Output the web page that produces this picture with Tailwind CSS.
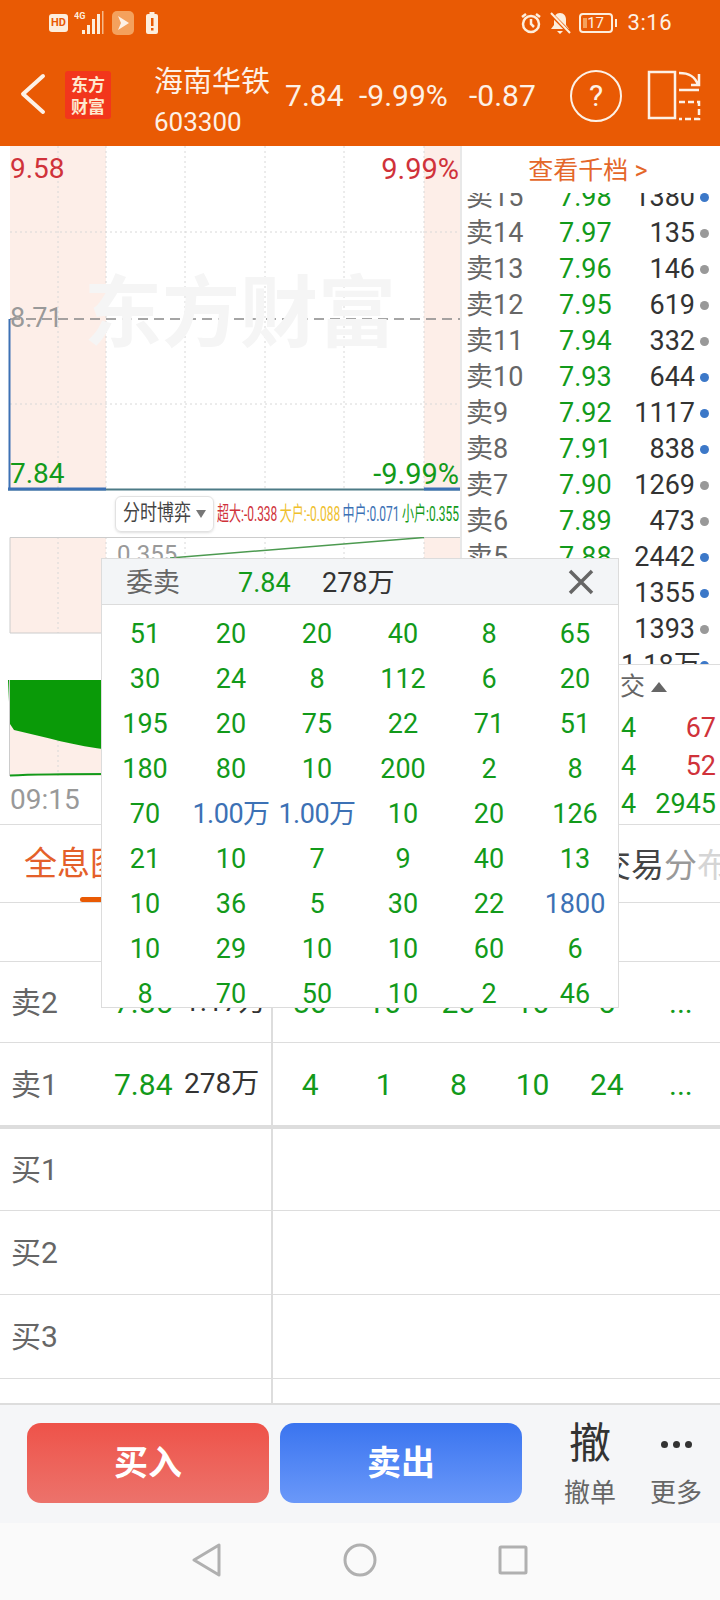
<!DOCTYPE html>
<html lang="zh">
<head>
<meta charset="utf-8">
<script src="https://cdn.jsdelivr.net/npm/@tailwindcss/browser@4"></script>
</head>
<body class="m-0 bg-white">
<div class="relative w-[720px] h-[1600px] overflow-hidden bg-white flex flex-col font-['Roboto','Noto_Sans_CJK_SC',sans-serif]">

  <!-- header -->
  <header class="h-[146px] shrink-0 bg-[#e95a04] text-[#fdf1e6] flex flex-col">
    <div class="h-[46px] flex items-center pl-[49px] pr-[48px] justify-between">
      <div class="flex items-center gap-[6px]">
        <span class="w-[19px] h-[18px] bg-[#fdeedd] rounded-[3px] text-[#e95a04] text-[11px] font-bold leading-[18px] text-center">HD</span>
        <svg width="32" height="28" viewBox="0 0 32 28"><text x="0" y="10" font-size="9" font-weight="700" fill="#fdeedd" font-family="Roboto">4G</text><g fill="#fdeedd"><rect x="8" y="21" width="3" height="4"/><rect x="13" y="16" width="3" height="9"/><rect x="18" y="10" width="3" height="15"/><rect x="23" y="5" width="3" height="20"/></g><rect x="28" y="2" width="1.500" height="23" fill="#f6b98a"/></svg>
        <svg width="22" height="24" viewBox="0 0 22 24"><rect width="22" height="24" rx="5" fill="#f4a15d"/><path d="M6 5l11 7-11 7 3-7z" fill="#fdf1e6"/></svg>
        <svg width="12" height="22" viewBox="0 0 12 22" class="ml-[6px]"><rect x="3.500" y="0" width="5" height="2" fill="#fdeedd"/><rect y="2" width="12" height="20" rx="2" fill="#fdeedd"/><rect x="5" y="6" width="2.500" height="8" fill="#e95a04"/><rect x="5" y="16" width="2.500" height="2.500" fill="#e95a04"/></svg>
      </div>
      <div class="flex items-center">
        <svg width="22" height="22" viewBox="0 0 22 22" fill="none" stroke="#fdeedd" stroke-width="2.500"><circle cx="11" cy="12" r="8"/><path d="M11 7v5l3 3M2 5l4-3M20 5l-4-3" /></svg>
        <svg width="22" height="24" viewBox="0 0 22 24" class="ml-[7px]"><path d="M11 2c4 0 6 3 6 7v5l3 4H2l3-4V9c0-4 2-7 6-7zM8 20h6l-3 3z" fill="#fdeedd"/><path d="M1 2l20 20" stroke="#e95a04" stroke-width="4"/><path d="M2 2l19 20" stroke="#fdeedd" stroke-width="2"/></svg>
        <div class="ml-[8px] relative w-[34px] h-[20px] border-2 border-[#fdeedd] rounded-[4px] text-[15px] leading-[17px] text-center">
          <span class="absolute left-[2px] top-[3px] w-[4px] h-[10px] bg-[#f5a25a]"></span>17
        </div>
        <span class="w-[2px] h-[8px] bg-[#fdeedd] ml-[2px]"></span>
        <span class="ml-[11px] text-[22px] leading-none tracking-[0.5px]">3:16</span>
      </div>
    </div>
    <div class="flex-1 flex items-center relative">
      <svg width="26" height="42" viewBox="0 0 26 42" class="ml-[20px] mb-[4px]" fill="none" stroke="#fdf1e6" stroke-width="4" stroke-linecap="round" stroke-linejoin="round"><path d="M23 3L3 21l20 18"/></svg>
      <div class="ml-[19px] mb-[2px] w-[46px] h-[48px] bg-[#f2361c] rounded-[3px] text-[#fde9cf] text-[17px] leading-[22px] font-bold text-center pt-[2px] font-['Noto_Sans_CJK_SC',sans-serif]">东方<br>财富</div>
      <div class="ml-[43px] pt-[9px] flex flex-col">
        <span class="text-[29px] leading-[42px]">海南华铁</span>
        <span class="text-[26px] leading-[38px]">603300</span>
      </div>
      <div class="ml-[15px] flex text-[30px] leading-none">
        <span class="w-[74px]">7.84</span><span class="w-[110px]">-9.99%</span><span>-0.87</span>
      </div>
      <div class="absolute left-[570px] top-[24px] w-[52px] h-[52px] border-2 border-[#fdf1e6] rounded-full text-[30px] leading-[48px] text-center">?</div>
      <svg width="56" height="52" viewBox="0 0 56 52" class="absolute left-[647px] top-[24px]" fill="none" stroke="#fdf1e6" stroke-width="2.500"><rect x="2" y="2" width="26" height="46"/><path d="M32 3c10 0 16 3 19 12M52 4v11h-8M32 20h20"/><path d="M32 32h20v17H32" stroke-dasharray="6 3"/></svg>
    </div>
  </header>

  <!-- quote area -->
  <div class="h-[679px] shrink-0 flex border-b border-[#dddddd]">
    <!-- left charts -->
    <div class="w-[460px] shrink-0 flex flex-col">
      <div class="relative h-[345px]">
        <svg width="460" height="345" viewBox="0 0 460 345" class="absolute inset-0">
          <rect x="10" width="96" height="343" fill="#fdeee8"/>
          <rect x="424" width="36" height="343" fill="#fdeee8"/>
          <g stroke="#d8d8d8" stroke-dasharray="2 3">
            <path d="M58 0v343M106 0v343M185 0v343M265 0v343M344 0v343M424 0v343M10 86h450M10 258h450"/>
          </g>
          <path d="M10 173h450" stroke="#888888" stroke-width="1.500" stroke-dasharray="10 6"/>
          <path d="M9.500 173V344" stroke="#3c71b5" stroke-width="2"/>
          <path d="M8 343.500h452" stroke="#4d7a86" stroke-width="2"/>
          <path d="M8 343h98M424 343h36" stroke="#3c71b5" stroke-width="3"/>
        </svg>
        <span class="absolute left-[84px] top-[122px] text-[#f5f5f5] text-[78px] leading-none font-bold whitespace-nowrap font-['Noto_Sans_CJK_SC',sans-serif]">东方财富</span>
        <span class="absolute left-[10px] top-[9px] text-[#d0323a] text-[28px] leading-none">9.58</span>
        <span class="absolute right-[1px] top-[9px] text-[#d0323a] text-[29px] leading-none">9.99%</span>
        <span class="absolute left-[10px] top-[159px] text-[#999999] text-[27px] leading-none">8.71</span>
        <span class="absolute left-[10px] top-[314px] text-[#129a1a] text-[28px] leading-none">7.84</span>
        <span class="absolute right-[1px] top-[314px] text-[#129a1a] text-[29px] leading-none">-9.99%</span>
      </div>
      <div class="h-[46px] flex items-center pl-[115px] whitespace-nowrap">
        <div class="shrink-0 w-[99px] h-[36px] border border-[#e2e2e2] rounded-[6px] flex items-center justify-center gap-[5px] text-[#444444] text-[17px] shadow-sm"><span class="scale-y-125">分时博弈</span><span class="w-0 h-0 border-x-[5px] border-x-transparent border-t-[8px] border-t-[#777777]"></span></div>
        <div class="ml-[3px] w-[240px] h-[30px]">
          <div class="w-max flex gap-[4px] text-[20px] leading-[30px] origin-left scale-x-[0.6]">
            <span class="text-[#d0323a]">超大:-0.338</span><span class="text-[#efc02c]">大户:-0.088</span><span class="text-[#3c71b5]">中户:0.071</span><span class="text-[#129a1a]">小户:0.355</span>
          </div>
        </div>
      </div>
      <div class="relative h-[97px]">
        <svg width="460" height="97" viewBox="0 0 460 97" class="absolute inset-0">
          <rect x="10" width="96" height="96" fill="#fdeee8"/>
          <rect x="424" width="36" height="96" fill="#fdeee8"/>
          <path d="M58 0v96M106 0v96M185 0v96M265 0v96M344 0v96M424 0v96" stroke="#d8d8d8" stroke-dasharray="2 3"/>
          <path d="M10 96V.5H460M10 96H106" stroke="#cccccc" fill="none"/>
          <path d="M170 21L424 .5" stroke="#4c9a50" stroke-width="1.500" fill="none"/>
        </svg>
        <span class="absolute left-[117px] top-[5px] text-[#999999] text-[24px] leading-none">0.355</span>
      </div>
      <div class="h-[46px]"></div>
      <div class="relative h-[97px]">
        <svg width="110" height="97" viewBox="0 0 110 97" class="absolute inset-0">
          <rect x="10" width="100" height="96" fill="#fdeee8"/>
          <path d="M58 0v96" stroke="#d8d8d8" stroke-dasharray="2 3"/>
          <path d="M8 0H110V70C75 66 45 57 14 50L10 44z" fill="#0a9a08"/>
          <path d="M9.500 0V96" stroke="#cccccc"/>
          <path d="M10 95.500C40 94 80 94 110 94" stroke="#129a1a" stroke-width="2" fill="none"/>
        </svg>
      </div>
      <div class="pl-[10px] pt-[4px] text-[#999999] text-[28px] leading-[38px]">09:15</div>
    </div>

    <!-- right order book -->
    <div class="w-[260px] shrink-0 flex flex-col border-l-2 border-[#e8e8e8]">
      <div class="h-[47px] shrink-0 text-center text-[#e4672a] text-[25px] leading-[50px] pr-[6px]">查看千档 &gt;</div>
      <div class="h-[471px] shrink-0 overflow-hidden text-[27px] leading-[36px] whitespace-nowrap">
        <div class="-mt-[14px]">
          <div class="h-[36px] flex items-center pl-[4px]"><span class="w-[93px] text-[#666666]">卖15</span><span class="w-[62px] text-[#129a1a]">7.98</span><span class="w-[74px] text-right text-[#333333]">1380</span><span class="ml-[5px] w-[9px] h-[9px] rounded-full bg-[#3c78c8]"></span></div>
          <div class="h-[36px] flex items-center pl-[4px]"><span class="w-[93px] text-[#666666]">卖14</span><span class="w-[62px] text-[#129a1a]">7.97</span><span class="w-[74px] text-right text-[#333333]">135</span><span class="ml-[5px] w-[9px] h-[9px] rounded-full bg-[#999999]"></span></div>
          <div class="h-[36px] flex items-center pl-[4px]"><span class="w-[93px] text-[#666666]">卖13</span><span class="w-[62px] text-[#129a1a]">7.96</span><span class="w-[74px] text-right text-[#333333]">146</span><span class="ml-[5px] w-[9px] h-[9px] rounded-full bg-[#999999]"></span></div>
          <div class="h-[36px] flex items-center pl-[4px]"><span class="w-[93px] text-[#666666]">卖12</span><span class="w-[62px] text-[#129a1a]">7.95</span><span class="w-[74px] text-right text-[#333333]">619</span><span class="ml-[5px] w-[9px] h-[9px] rounded-full bg-[#999999]"></span></div>
          <div class="h-[36px] flex items-center pl-[4px]"><span class="w-[93px] text-[#666666]">卖11</span><span class="w-[62px] text-[#129a1a]">7.94</span><span class="w-[74px] text-right text-[#333333]">332</span><span class="ml-[5px] w-[9px] h-[9px] rounded-full bg-[#999999]"></span></div>
          <div class="h-[36px] flex items-center pl-[4px]"><span class="w-[93px] text-[#666666]">卖10</span><span class="w-[62px] text-[#129a1a]">7.93</span><span class="w-[74px] text-right text-[#333333]">644</span><span class="ml-[5px] w-[9px] h-[9px] rounded-full bg-[#3c78c8]"></span></div>
          <div class="h-[36px] flex items-center pl-[4px]"><span class="w-[93px] text-[#666666]">卖9</span><span class="w-[62px] text-[#129a1a]">7.92</span><span class="w-[74px] text-right text-[#333333]">1117</span><span class="ml-[5px] w-[9px] h-[9px] rounded-full bg-[#3c78c8]"></span></div>
          <div class="h-[36px] flex items-center pl-[4px]"><span class="w-[93px] text-[#666666]">卖8</span><span class="w-[62px] text-[#129a1a]">7.91</span><span class="w-[74px] text-right text-[#333333]">838</span><span class="ml-[5px] w-[9px] h-[9px] rounded-full bg-[#3c78c8]"></span></div>
          <div class="h-[36px] flex items-center pl-[4px]"><span class="w-[93px] text-[#666666]">卖7</span><span class="w-[62px] text-[#129a1a]">7.90</span><span class="w-[74px] text-right text-[#333333]">1269</span><span class="ml-[5px] w-[9px] h-[9px] rounded-full bg-[#999999]"></span></div>
          <div class="h-[36px] flex items-center pl-[4px]"><span class="w-[93px] text-[#666666]">卖6</span><span class="w-[62px] text-[#129a1a]">7.89</span><span class="w-[74px] text-right text-[#333333]">473</span><span class="ml-[5px] w-[9px] h-[9px] rounded-full bg-[#999999]"></span></div>
          <div class="h-[36px] flex items-center pl-[4px]"><span class="w-[93px] text-[#666666]">卖5</span><span class="w-[62px] text-[#129a1a]">7.88</span><span class="w-[74px] text-right text-[#333333]">2442</span><span class="ml-[5px] w-[9px] h-[9px] rounded-full bg-[#3c78c8]"></span></div>
          <div class="h-[36px] flex items-center pl-[4px]"><span class="w-[93px] text-[#666666]">卖4</span><span class="w-[62px] text-[#129a1a]">7.87</span><span class="w-[74px] text-right text-[#333333]">1355</span><span class="ml-[5px] w-[9px] h-[9px] rounded-full bg-[#3c78c8]"></span></div>
          <div class="h-[36px] flex items-center pl-[4px]"><span class="w-[93px] text-[#666666]">卖3</span><span class="w-[62px] text-[#129a1a]">7.86</span><span class="w-[74px] text-right text-[#333333]">1393</span><span class="ml-[5px] w-[9px] h-[9px] rounded-full bg-[#999999]"></span></div>
          <div class="h-[36px] flex items-center pl-[4px]"><span class="w-[93px] text-[#666666]">卖2</span><span class="w-[62px] text-[#129a1a]">7.85</span><span class="w-[74px] text-right text-[#333333]">1.18万</span><span class="ml-[5px] w-[9px] h-[9px] rounded-full bg-[#3c78c8]"></span></div>
        </div>
      </div>
      <div class="flex-1 border-t border-[#dddddd] text-[27px] whitespace-nowrap">
        <div class="h-[44px] flex items-center pl-[158px] text-[#666666] text-[25px]">交<span class="ml-[6px] w-0 h-0 border-x-[8px] border-x-transparent border-b-[10px] border-b-[#666666]"></span></div>
        <div class="h-[38px] flex items-center justify-between pl-[159px] pr-[4px]"><span class="text-[#129a1a]">4</span><span class="text-[#d0323a]">67</span></div>
        <div class="h-[38px] flex items-center justify-between pl-[159px] pr-[4px]"><span class="text-[#129a1a]">4</span><span class="text-[#d0323a]">52</span></div>
        <div class="h-[38px] flex items-center justify-between pl-[159px] pr-[4px]"><span class="text-[#129a1a]">4</span><span class="text-[#129a1a]">2945</span></div>
      </div>
    </div>
  </div>

  <!-- tabs -->
  <div class="h-[78px] shrink-0 relative border-b border-[#dddddd] flex items-center pl-[24px] text-[33px] whitespace-nowrap overflow-hidden">
    <span class="text-[#e4602a]">全息图</span>
    <span class="absolute left-[598px] top-[16px] text-[#444444]">交易<span class="text-[#999999]">分</span><span class="text-[#d5d5d5]">布</span></span>
    <span class="absolute left-[80px] bottom-0 w-[60px] h-[5px] rounded-full bg-[#e95a04]"></span>
  </div>
  <div class="h-[59px] shrink-0 border-b border-[#dddddd]"></div>

  <!-- depth table -->
  <div class="flex-1 min-h-0 flex flex-col overflow-hidden text-[30px] whitespace-nowrap">
    <div class="h-[81px] shrink-0 flex items-center border-b border-[#dddddd]">
      <span class="w-[114px] pl-[11px] text-[#666666]">卖2</span>
      <span class="w-[70px] text-[#129a1a]">7.85</span>
      <span class="w-[87px] text-[#333333] text-[28px]">1.17万</span>
      <div class="flex-1 self-stretch border-l-2 border-[#dddddd] grid grid-cols-6 items-center text-center text-[#129a1a] pr-[2px]"><span>30</span><span>10</span><span>20</span><span>10</span><span>5</span><span>...</span></div>
    </div>
    <div class="h-[82px] shrink-0 flex items-center">
      <span class="w-[114px] pl-[11px] text-[#666666]">卖1</span>
      <span class="w-[70px] text-[#129a1a]">7.84</span>
      <span class="w-[87px] text-[#333333] text-[28px]">278万</span>
      <div class="flex-1 self-stretch border-l-2 border-[#dddddd] grid grid-cols-6 items-center text-center text-[#129a1a] pr-[2px]"><span>4</span><span>1</span><span>8</span><span>10</span><span>24</span><span>...</span></div>
    </div>
    <div class="h-[4px] shrink-0 bg-[#dddddd]"></div>
    <div class="h-[82px] shrink-0 flex items-center border-b border-[#dddddd]"><span class="w-[271px] pl-[11px] text-[#666666]">买1</span><div class="flex-1 self-stretch border-l-2 border-[#dddddd]"></div></div>
    <div class="h-[84px] shrink-0 flex items-center border-b border-[#dddddd]"><span class="w-[271px] pl-[11px] text-[#666666]">买2</span><div class="flex-1 self-stretch border-l-2 border-[#dddddd]"></div></div>
    <div class="h-[84px] shrink-0 flex items-center border-b border-[#dddddd]"><span class="w-[271px] pl-[11px] text-[#666666]">买3</span><div class="flex-1 self-stretch border-l-2 border-[#dddddd]"></div></div>
    <div class="flex-1 flex"><span class="w-[271px]"></span><div class="flex-1 border-l-2 border-[#dddddd]"></div></div>
  </div>

  <!-- action bar -->
  <div class="h-[120px] shrink-0 bg-[#f5f6f8] border-t-2 border-[#dddddd] flex pl-[27px]">
    <div class="mt-[18px] w-[242px] h-[80px] rounded-[14px] bg-gradient-to-b from-[#ee5249] to-[#ec726b] text-white font-bold text-[34px] flex items-center justify-center">买入</div>
    <div class="mt-[18px] ml-[11px] w-[242px] h-[80px] rounded-[14px] bg-gradient-to-b from-[#3a74ef] to-[#6a98f9] text-white font-bold text-[34px] flex items-center justify-center">卖出</div>
    <div class="ml-[35px] w-[66px] flex flex-col items-center">
      <span class="text-[#333333] text-[42px] leading-[60px] mt-[9px]">撤</span>
      <span class="text-[#666666] text-[26px] leading-[36px] mt-[1px]">撤单</span>
    </div>
    <div class="ml-[26px] w-[54px] flex flex-col items-center">
      <span class="h-[70px] flex items-center gap-[5px] pt-[9px]"><i class="w-[7px] h-[7px] rounded-full bg-[#333333]"></i><i class="w-[7px] h-[7px] rounded-full bg-[#333333]"></i><i class="w-[7px] h-[7px] rounded-full bg-[#333333]"></i></span>
      <span class="text-[#666666] text-[26px] leading-[36px]">更多</span>
    </div>
  </div>

  <!-- nav bar -->
  <div class="h-[77px] shrink-0 bg-[#fafafa] flex items-center justify-center pb-[4px]">
    <div class="flex items-center gap-[121px]">
      <svg width="30" height="34" viewBox="0 0 30 34" fill="none" stroke="#b0b0b0" stroke-width="3" stroke-linejoin="round"><path d="M27 2v30L2 17z"/></svg>
      <svg width="34" height="34" viewBox="0 0 34 34" fill="none" stroke="#b0b0b0" stroke-width="3"><circle cx="17" cy="17" r="15"/></svg>
      <svg width="30" height="30" viewBox="0 0 30 30" fill="none" stroke="#b0b0b0" stroke-width="3" stroke-linejoin="round"><rect x="2" y="2" width="26" height="26" rx="1"/></svg>
    </div>
  </div>

  <!-- popup -->
  <div class="absolute left-[101px] top-[558px] w-[518px] h-[450px] bg-white border border-[#dcdcdc] overflow-hidden">
    <div class="h-[46px] bg-[#f3f5f7] border-b border-[#dcdcdc] flex items-center pl-[24px] pt-[3px] relative text-[27px]">
      <span class="w-[112px] text-[#666666]">委卖</span>
      <span class="w-[84px] text-[#129a1a]">7.84</span>
      <span class="text-[#333333]">278万</span>
      <svg width="26" height="26" viewBox="0 0 26 26" class="absolute right-[24px] top-[10px]" stroke="#666666" stroke-width="3.500"><path d="M2 2l22 22M24 2L2 24"/></svg>
    </div>
    <div class="grid grid-cols-6 auto-rows-[45px] pt-[7px] items-center text-center text-[27px] text-[#129a1a] whitespace-nowrap">
      <span>51</span><span>20</span><span>20</span><span>40</span><span>8</span><span>65</span>
      <span>30</span><span>24</span><span>8</span><span>112</span><span>6</span><span>20</span>
      <span>195</span><span>20</span><span>75</span><span>22</span><span>71</span><span>51</span>
      <span>180</span><span>80</span><span>10</span><span>200</span><span>2</span><span>8</span>
      <span>70</span><span class="text-[#3c71b5] tracking-[-0.5px]">1.00万</span><span class="text-[#3c71b5] tracking-[-0.5px]">1.00万</span><span>10</span><span>20</span><span>126</span>
      <span>21</span><span>10</span><span>7</span><span>9</span><span>40</span><span>13</span>
      <span>10</span><span>36</span><span>5</span><span>30</span><span>22</span><span class="text-[#3c71b5]">1800</span>
      <span>10</span><span>29</span><span>10</span><span>10</span><span>60</span><span>6</span>
      <span>8</span><span>70</span><span>50</span><span>10</span><span>2</span><span>46</span>
    </div>
  </div>
</div>
</body>
</html>
